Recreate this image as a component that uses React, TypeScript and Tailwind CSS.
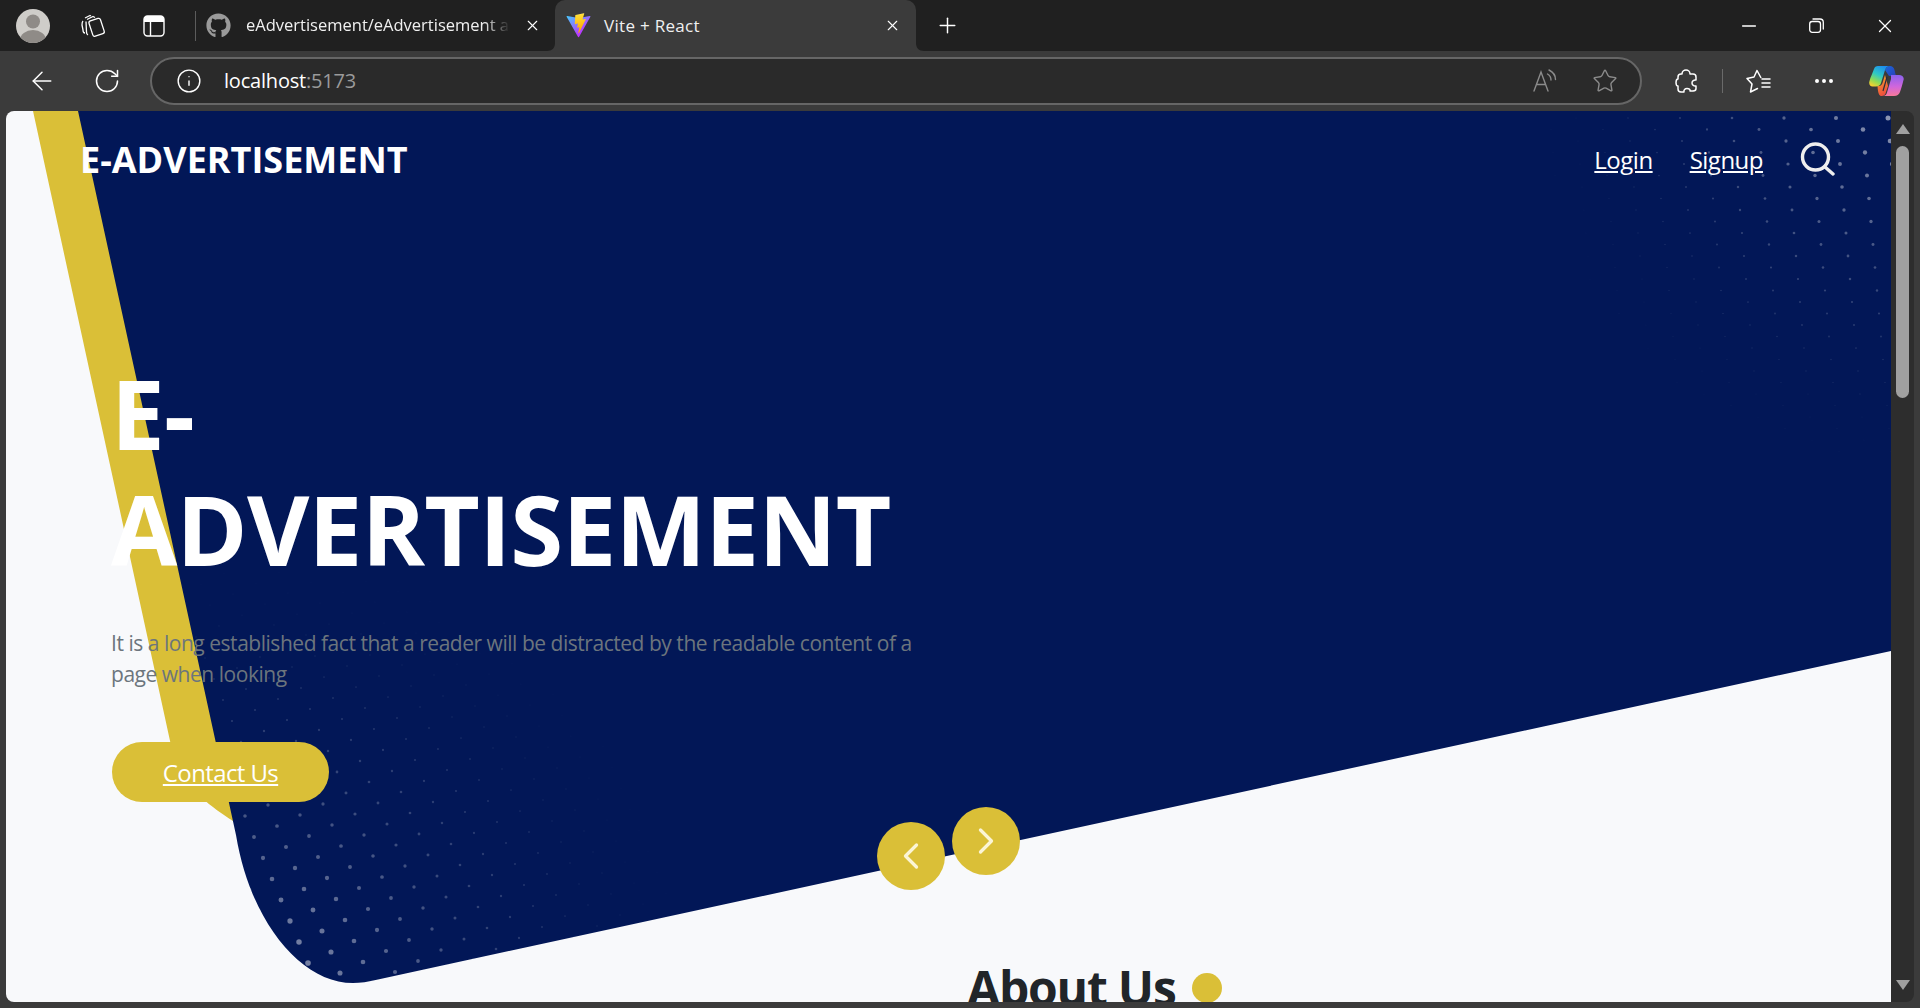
import { ArrowLeft, ChevronLeft, ChevronRight, Ellipsis, Info, Minus, Plus, RotateCw, Star, X } from "lucide-react";
import { FaGithub } from "react-icons/fa";

const NAVY_PATH =
  "M78 111 L1891 111 L1891 651 L378 979.500 C368 982 360 983 353 983 C300 983 250 920 236 835 Z";
const YELLOW_PATH =
  "M33 111 L90 111 L240 830 L233 821 C210 806 180 785 172 750 Z";

type Dot = { x: number; y: number; r: number; o: number };

// halftone dots: a slanted lattice that fades out with distance from one corner
const makeDots = (
  cx: number,
  cy: number,
  ax: number,
  ay: number,
  bx: number,
  by: number,
  reach: number,
  maxR: number,
) => {
  const dots: Dot[] = [];
  for (let i = -30; i < 30; i++) {
    for (let j = -40; j < 40; j++) {
      const x = cx + i * ax + j * bx;
      const y = cy + i * ay + j * by;
      const d = Math.hypot(x - cx, y - cy);
      if (d > reach) continue;
      const k = Math.pow(1 - d / reach, 1.5);
      dots.push({ x, y, r: 0.5 + maxR * k, o: 0.04 + 0.5 * k });
    }
  }
  return dots;
};

const cornerDots = makeDots(262, 985, 9, 21, 32, 10, 420, 2.8);
const topDots = makeDots(1888, 118, 27, 11.5, 52, 0, 340, 2);

const Backdrop = () => (
  <svg
    className="absolute inset-0"
    width="1885"
    height="891"
    viewBox="6 111 1885 891"
  >
    <defs>
      <clipPath id="navyClip">
        <path d={NAVY_PATH} />
      </clipPath>
    </defs>
    <path d={YELLOW_PATH} fill="#dabf37" />
    <path d={NAVY_PATH} fill="#021757" />
    <g clipPath="url(#navyClip)" fill="#ffffff">
      {[...cornerDots, ...topDots].map((d, i) => (
        <circle key={i} cx={d.x} cy={d.y} r={d.r} opacity={d.o} />
      ))}
    </g>
  </svg>
);

const ViteIcon = () => (
  <svg width="25" height="25" viewBox="0 0 410 404" fill="none">
    <path
      d="M399.641 59.5246L215.643 388.545C211.844 395.338 202.084 395.378 198.228 388.618L10.5817 59.5563C6.38087 52.1896 12.6802 43.2665 21.0281 44.7586L205.223 77.6824C206.398 77.8924 207.601 77.8904 208.776 77.6763L389.119 44.8058C397.439 43.2894 403.768 52.1434 399.641 59.5246Z"
      fill="url(#viteA)"
    />
    <path
      d="M292.965 1.5744L156.801 28.2552C154.563 28.6937 152.906 30.5903 152.771 32.8664L144.395 174.33C144.198 177.662 147.258 180.248 150.51 179.498L188.42 170.749C191.967 169.931 195.172 173.055 194.443 176.622L183.18 231.775C182.422 235.487 185.907 238.661 189.532 237.56L212.947 230.446C216.577 229.344 220.065 232.527 219.297 236.242L201.398 322.875C200.278 328.294 207.486 331.249 210.492 326.603L212.5 323.5L323.454 102.072C325.312 98.3645 322.108 94.137 318.036 94.9228L279.014 102.454C275.347 103.161 272.227 99.746 273.262 96.1583L298.731 7.86689C299.767 4.27314 296.636 0.855181 292.965 1.5744Z"
      fill="url(#viteB)"
    />
    <defs>
      <linearGradient id="viteA" x1="6" y1="33" x2="235" y2="344" gradientUnits="userSpaceOnUse">
        <stop stopColor="#41D1FF" />
        <stop offset="1" stopColor="#BD34FE" />
      </linearGradient>
      <linearGradient id="viteB" x1="194" y1="8.8" x2="236" y2="293" gradientUnits="userSpaceOnUse">
        <stop stopColor="#FFEA83" />
        <stop offset="0.08" stopColor="#FFDD35" />
        <stop offset="1" stopColor="#FFA800" />
      </linearGradient>
    </defs>
  </svg>
);

const Avatar = () => (
  <svg width="34" height="34" viewBox="0 0 34 34">
    <clipPath id="avatarClip">
      <circle cx="17" cy="17" r="17" />
    </clipPath>
    <g clipPath="url(#avatarClip)">
      <rect width="34" height="34" fill="#cfcdc9" />
      <circle cx="17" cy="12.5" r="7" fill="#8f8b87" />
      <ellipse cx="17" cy="31" rx="13" ry="10" fill="#8f8b87" />
    </g>
  </svg>
);

const WorkspacesIcon = () => (
  <svg width="26" height="26" viewBox="0 0 26 26" fill="none" stroke="#fff" strokeWidth="1.3" strokeLinejoin="round">
    <path d="M5 5 L10 2.5 L11 3 M3 8 C2 9 2 10 2 12 L3 17 C3 19 4 20 5 20" />
    <path d="M7 6.5 L13 3.5 L15 4.5 M6 8.5 L6.5 19 C6.5 20.5 7 21.5 8 22" />
    <rect x="10.5" y="6.5" width="12" height="16" rx="2" transform="rotate(-18 16 14)" />
  </svg>
);

const VerticalTabsIcon = () => (
  <svg width="22" height="22" viewBox="0 0 22 22" fill="none">
    <rect x="1" y="1" width="20" height="20" rx="3.5" stroke="#fff" strokeWidth="1.4" />
    <path d="M1 4.5 A3.5 3.5 0 0 1 4.500 1 H17.5 A3.5 3.5 0 0 1 21 4.500 V7 H1 Z" fill="#fff" />
    <path d="M7.500 7 V21" stroke="#fff" strokeWidth="1.4" />
  </svg>
);

const RestoreIcon = () => (
  <svg width="15" height="15" viewBox="0 0 15 15" fill="none" stroke="#fff" strokeWidth="1.3">
    <rect x="0.700" y="3.500" width="10.800" height="10.800" rx="2.500" />
    <path d="M4 1 H11 A3.300 3.300 0 0 1 14.300 4.300 V11" strokeLinecap="round" />
  </svg>
);

const ReadAloudIcon = () => (
  <svg width="24" height="24" viewBox="0 0 24 24" fill="none" stroke="#8b8b8b" strokeWidth="1.4" strokeLinecap="round">
    <path d="M1 22 L8 3 L15 22 M3.500 15.500 H12.500" />
    <path d="M14.500 5 C17 6.500 18 8.500 18 11" />
    <path d="M16 1 C20 3 22.500 6 22.500 10.500" />
  </svg>
);

const PuzzleIcon = () => (
  <svg width="22" height="24" viewBox="0 0 22 24" fill="none" stroke="#fff" strokeWidth="1.5" strokeLinejoin="round">
    <path d="M7 5 C7 2.500 9 1 11 1 C13 1 15 2.500 15 5 H18 C19.700 5 21 6.300 21 8 V11 C19 10.500 17 12 17 14 C17 16 19 17.500 21 17 V19.500 C21 21 19.700 22 18 22 H15 C15.500 20.500 14 19.500 12 19.500 C10 19.500 8.500 21 9 23 H6 C4 23 3 21.500 3 20 V17 C1.500 17 1 15.500 1 13.500 C1 11.500 1.500 10 3 10 V8 C3 6.300 4.300 5 6 5 Z" />
  </svg>
);

const FavoritesIcon = () => (
  <svg width="25" height="25" viewBox="0 0 25 25" fill="none" stroke="#fff" strokeWidth="1.500" strokeLinejoin="round" strokeLinecap="round">
    <path d="M14.800 8.500 L11 1.500 L8 8 L1 9.500 L6 15 L4.500 23 L11.500 19.500" />
    <path d="M16 10 H24 M16 14 H24 M16 18 H24" />
  </svg>
);

const CopilotIcon = () => (
  <svg width="35" height="30" viewBox="0 0 35 30">
    <defs>
      <linearGradient id="copA" x1="0.700" y1="0" x2="0.200" y2="1">
        <stop offset="0" stopColor="#1c8cf2" />
        <stop offset="0.450" stopColor="#2fc9c4" />
        <stop offset="0.750" stopColor="#8fdc54" />
        <stop offset="1" stopColor="#f8d12f" />
      </linearGradient>
      <linearGradient id="copB" x1="0.500" y1="0" x2="0.500" y2="1">
        <stop offset="0" stopColor="#8a62ee" />
        <stop offset="0.550" stopColor="#d066dc" />
        <stop offset="1" stopColor="#f8789a" />
      </linearGradient>
      <linearGradient id="copC" x1="0.300" y1="0" x2="0.600" y2="1">
        <stop offset="0" stopColor="#f7a02c" />
        <stop offset="1" stopColor="#ee4a3e" />
      </linearGradient>
      <linearGradient id="copD" x1="0" y1="0" x2="1" y2="1">
        <stop offset="0" stopColor="#1a68dc" />
        <stop offset="1" stopColor="#2a3fb8" />
      </linearGradient>
    </defs>
    <path d="M16 4 C17 1.500 19 0 21 0 C23 0 25 1.500 25.500 4 L27 10 H20 Z" fill="url(#copD)" />
    <path d="M8.500 20 H10 C12 20 13 18.500 13.500 17 L16 9 L19 20 L17 26 C16.500 28.500 15 30 12.500 30 C10.500 30 9 28 8.500 20 Z" fill="url(#copC)" />
    <path d="M9 0 H21 C18.500 0 17 1.500 16 4 L12 17 C11.500 19 9.500 20.500 7 20.500 H3.500 C1 20.500 -0.500 18 0.500 15 C1.500 11 4 6 5 3 C5.500 1 7 0 9 0 Z" fill="url(#copA)" />
    <path d="M22 9 H30 C33 9 35.500 11 34.500 14 C33.500 18 32 23 31 26 C30 28.500 28 30 25 30 H14 C16 30 17.500 28.500 18 26.500 L22 13 Z" fill="url(#copB)" />
    <path d="M18 11 L14 25" stroke="#2b2b3a" strokeWidth="1.200" />
  </svg>
);

const SearchIcon = () => (
  <svg width="35" height="34" viewBox="0 0 35 34" fill="none" stroke="#eeeeee" strokeWidth="3.400" strokeLinecap="round">
    <circle cx="15.500" cy="15" r="13" />
    <path d="M25 25 L33 32" />
  </svg>
);

const TabFlare = ({ flip }: { flip?: boolean }) => (
  <svg
    className={flip ? "absolute bottom-0 left-full" : "absolute bottom-0 right-full"}
    width="8"
    height="8"
    viewBox="0 0 8 8"
  >
    <path d={flip ? "M0 0 C0 5 3 8 8 8 H0 Z" : "M8 0 C8 5 5 8 0 8 H8 Z"} fill="#3b3b3b" />
  </svg>
);

const TabStrip = () => (
  <div className="flex h-[51px] items-center bg-[#202020] text-[17px] text-[#f0f0f0]">
    <div className="ml-4">
      <Avatar />
    </div>
    <div className="ml-[30px]">
      <WorkspacesIcon />
    </div>
    <div className="ml-[37px]">
      <VerticalTabsIcon />
    </div>
    <div className="ml-[30px] h-[30px] w-px bg-[#5c5c5c]" />
    <FaGithub className="ml-[10px] text-[25px] text-[#9a9a9a]" />
    <div className="ml-[15px] w-[264px] overflow-hidden whitespace-nowrap text-[16.5px] [mask-image:linear-gradient(90deg,#000_90%,transparent)]">
      eAdvertisement/eAdvertisement a
    </div>
    <X size={17} strokeWidth={1.6} className="ml-[14px] text-white" />
    <div className="relative ml-[14px] flex h-[51px] w-[361px] items-center self-end rounded-t-[10px] bg-[#3b3b3b] pl-[11px]">
      <TabFlare />
      <ViteIcon />
      <span className="ml-[13px] tracking-[0.3px]">Vite + React</span>
      <X size={17} strokeWidth={1.6} className="ml-auto mr-[15px] text-white" />
      <TabFlare flip />
    </div>
    <Plus size={25} strokeWidth={1.4} className="ml-[19px] text-white" />
    <div className="ml-auto flex items-center">
      <Minus size={22} strokeWidth={1.4} className="text-white" />
      <div className="ml-[49px]">
        <RestoreIcon />
      </div>
      <X size={22} strokeWidth={1.4} className="ml-[50px] mr-[24px] text-white" />
    </div>
  </div>
);

const ToolBar = () => (
  <div className="flex h-[60px] items-center bg-[#3b3b3b]">
    <ArrowLeft size={30} strokeWidth={1.2} className="ml-[27px] text-white" />
    <RotateCw size={28} strokeWidth={1.3} className="ml-[36px] text-white" />
    <div className="ml-[29px] flex h-[48px] w-[1492px] items-center rounded-full border-2 border-[#666666] bg-[#2a2a2a] pl-[24px] pr-[22px]">
      <Info size={26} strokeWidth={1.3} className="text-white" />
      <span className="ml-[22px] text-[20px] tracking-[-0.2px] text-white">
        localhost<span className="text-[#9a9a9a]">:5173</span>
      </span>
      <div className="ml-auto">
        <ReadAloudIcon />
      </div>
      <Star size={26} strokeWidth={1.3} className="ml-[35px] text-[#8b8b8b]" />
    </div>
    <div className="ml-[33px]">
      <PuzzleIcon />
    </div>
    <div className="ml-[25px] h-[24px] w-px bg-[#6a6a6a]" />
    <div className="ml-[23px]">
      <FavoritesIcon />
    </div>
    <Ellipsis size={24} strokeWidth={2} className="ml-[41px] text-white" />
    <div className="ml-[33px]">
      <CopilotIcon />
    </div>
  </div>
);

const ScrollBar = () => (
  <div className="flex w-[23px] flex-col items-center rounded-r-lg bg-[#2d2d2d] pt-[13px] pb-[12px]">
    <div className="h-0 w-0 border-x-[7px] border-b-[10px] border-x-transparent border-b-[#a0a0a0]" />
    <div className="mt-[12px] h-[252px] w-[13px] rounded-full bg-[#a0a0a0]" />
    <div className="mt-auto h-0 w-0 border-x-[7px] border-t-[10px] border-x-transparent border-t-[#a0a0a0]" />
  </div>
);

const Hero = () => (
  <div className="relative z-10">
    <nav className="flex h-[98px] items-center justify-between pl-[74px] pr-[56px] text-white">
      <a href="#" className="text-[36px] font-bold tracking-[0px] no-underline">
        E-ADVERTISEMENT
      </a>
      <div className="flex items-center text-[24px] tracking-[-0.5px]">
        <a href="#" className="underline">
          Login
        </a>
        <a href="#" className="ml-[37px] underline">
          Signup
        </a>
        <div className="ml-[37px] -mt-[2px]">
          <SearchIcon />
        </div>
      </div>
    </nav>
    <div className="pl-[105px] pt-[146px]">
      <h1 className="w-[820px] text-[96px] leading-[116px] font-bold tracking-[-0.7px] text-white">
        E-ADVERTISEMENT
      </h1>
      <p className="mt-[41px] w-[820px] text-[21px] leading-[31px] tracking-[-0.47px] text-[#6c757d]">
        It is a long established fact that a reader will be distracted by the
        readable content of a page when looking
      </p>
      <a
        href="#"
        className="ml-px mt-[52px] flex h-[60px] w-[217px] items-center justify-center rounded-[30px] bg-[#dabf37] pt-[2px] text-[24px] tracking-[-0.6px] text-white underline"
      >
        Contact Us
      </a>
    </div>
    <div className="ml-[871px] mt-[5px] flex gap-[7px]">
      <button className="mt-[15px] flex h-[68px] w-[68px] items-center justify-center rounded-full bg-[#dabf37] text-[#fbf5d6]">
        <ChevronLeft size={44} strokeWidth={1.8} />
      </button>
      <button className="flex h-[68px] w-[68px] items-center justify-center rounded-full bg-[#dabf37] text-[#fbf5d6]">
        <ChevronRight size={44} strokeWidth={1.8} />
      </button>
    </div>
    <div className="ml-[961px] mt-[69px] flex items-center gap-4">
      <h2 className="text-[48px] leading-[58px] font-bold tracking-[-1.2px] text-[#212529]">About Us</h2>
      <span className="h-[30px] w-[30px] rounded-full bg-[#dabf37]" />
    </div>
  </div>
);

const App = () => {
  return (
    <div className="flex h-[1008px] w-full flex-col overflow-hidden bg-[#3b3b3b] font-['Open_Sans','Liberation_Sans',sans-serif]">
      <TabStrip />
      <ToolBar />
      <div className="flex h-[891px] pl-[6px] pr-[6px]">
        <div className="relative h-full flex-1 overflow-hidden rounded-l-lg bg-[#f8f9fb]">
          <Backdrop />
          <Hero />
        </div>
        <ScrollBar />
      </div>
    </div>
  );
};

export default App;
